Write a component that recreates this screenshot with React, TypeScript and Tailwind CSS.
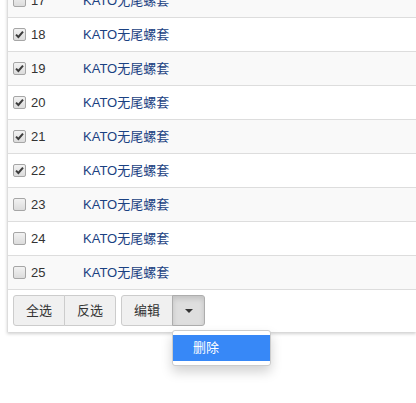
import React from "react";

type Row = { id: number; name: string; checked: boolean };

const rows: Row[] = [17, 18, 19, 20, 21, 22, 23, 24, 25].map((id) => ({
  id,
  name: "KATO无尾螺套",
  checked: id >= 18 && id <= 22,
}));

function Check({ checked }: { checked: boolean }) {
  return (
    <span className="inline-flex h-[13px] w-[13px] items-center justify-center rounded-[2px] border border-[#a6a6a6] bg-gradient-to-b from-[#f2f2f2] to-[#dcdcdc]">
      {checked && (
        <svg width="9" height="9" viewBox="0 0 9 9">
          <path d="M1 4.6 L3.4 7 L8 1.6" fill="none" stroke="#3c3c3c" strokeWidth="2" />
        </svg>
      )}
    </span>
  );
}

export default function App() {
  return (
    <div
      className="h-[403px] w-[416px] overflow-hidden bg-white text-[13px] text-[#333]"
      style={{ fontFamily: '"Liberation Sans", Arial, "Noto Sans CJK SC", sans-serif' }}
    >
      <div className="relative ml-[7px] mt-[-17px] border-l border-[#ddd] bg-white shadow-[0_2px_3px_rgba(0,0,0,0.18)]">
        {rows.map((r, i) => (
          <div
            key={r.id}
            className={`flex h-[34px] items-center border-t border-[#ddd] ${
              i % 2 === 0 ? "bg-[#f9f9f9]" : "bg-white"
            }`}
          >
            <div className="flex w-[75px] items-center pl-[5px]">
              <Check checked={r.checked} />
              <span className="ml-[5px]">{r.id}</span>
            </div>
            <span className="text-[#1a4182]">{r.name}</span>
          </div>
        ))}
        <div className="flex h-[43px] items-start gap-[5px] border-t border-[#ddd] pl-[5px] pt-[5px]">
          <div className="flex">
            <button className="h-[31px] rounded-l-[3px] border border-[#ccc] bg-[#f0f0f0] px-[12px] text-[13px] text-[#333]">
              全选
            </button>
            <button className="ml-[-1px] h-[31px] rounded-r-[3px] border border-[#ccc] bg-[#f0f0f0] px-[12px] text-[13px] text-[#333]">
              反选
            </button>
          </div>
          <div className="relative flex">
            <button className="h-[31px] rounded-l-[3px] border border-[#ccc] bg-[#f0f0f0] px-[12px] text-[13px] text-[#333]">
              编辑
            </button>
            <button className="ml-[-1px] flex h-[31px] w-[33px] items-center justify-center rounded-r-[3px] border border-[#adadad] bg-[#dedede] shadow-[inset_0_3px_5px_rgba(0,0,0,0.125)]">
              <span className="h-0 w-0 border-x-[4px] border-t-[4px] border-x-transparent border-t-[#333]" />
            </button>
            <div className="absolute left-[51px] top-[35px] z-10 w-[99px] rounded-[3px] border border-[#ccc] bg-white py-[4px] shadow-[0_6px_12px_rgba(0,0,0,0.175)]">
              <div className="flex h-[26px] items-center bg-[#3788f7] pl-[20px] text-[13px] text-white">删除</div>
            </div>
          </div>
        </div>
      </div>
    </div>
  );
}
